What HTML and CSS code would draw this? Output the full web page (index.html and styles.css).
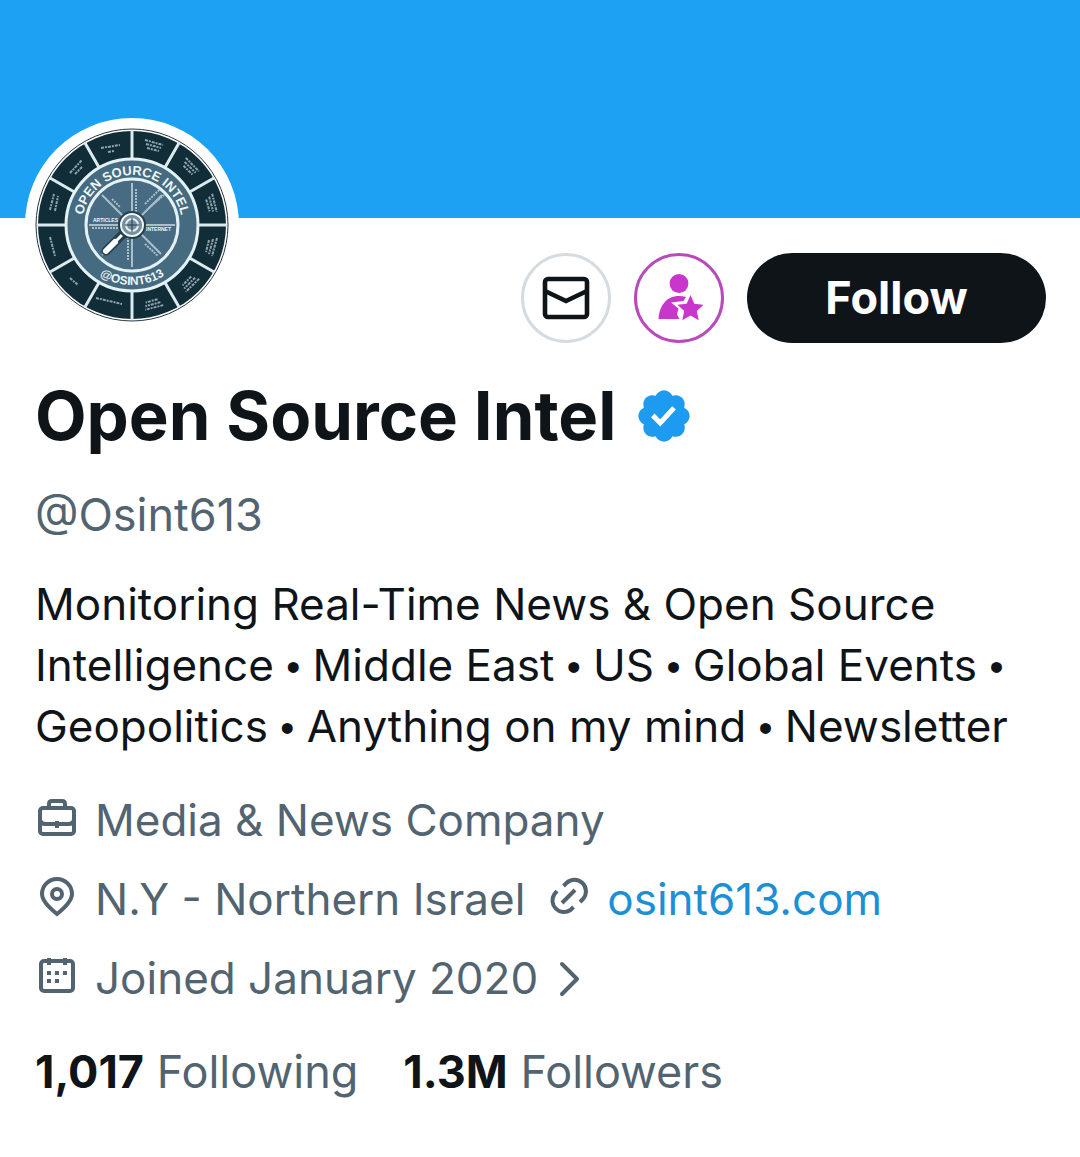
FILE: index.html
```html
<!DOCTYPE html>
<html lang="en">
<head>
<meta charset="utf-8">
<meta name="viewport" content="width=device-width, initial-scale=1">
<title>Open Source Intel (@Osint613)</title>
<link rel="stylesheet" href="styles.css">
</head>
<body>
<div class="banner"></div>
<main class="profile">
  <div class="top">
    <a class="avatar" href="#photo" aria-label="Profile photo">
      <svg viewBox="-97 -97 194 194" class="emblem">
        <defs>
          <path id="arc-top" d="M-50 0A50 50 0 0 1 50 0"/>
          <path id="arc-bottom" d="M-60 0A60 60 0 0 0 60 0"/>
        </defs>
        <circle r="96" fill="#fff" stroke="#26363f" stroke-width="1"/>
        <circle r="94" fill="#102d38"/>
        <g stroke="#dcebf0" stroke-width="3">
          <path d="M0-95V95M-95 0H95M-47-82L47 82M-82-47L82 47M47-82L-47 82M82-47L-82 47"/>
        </g>
        <g stroke="#8fa5ad" stroke-width="2" stroke-dasharray="3 1 2 1">
          <path id="labels" d="M13-85L31-80M14-81L29-77M15-77L27-74"/>
          <use href="#labels" transform="rotate(30)"/><use href="#labels" transform="rotate(60)"/>
          <use href="#labels" transform="rotate(90)"/><use href="#labels" transform="rotate(120)"/>
          <use href="#labels" transform="rotate(150)"/>
          <path d="M-31-77L-12-80M-24-73L-18-74M-62-52L-50-65M-57-51L-50-58M-82-15L-78-31M-77-14L-74-29M-82 12L-77 31M-62 53L-54 60M-36 73L-10 79"/>
        </g>
        <circle r="66" fill="#456b80" stroke="#e4f2f6" stroke-width="3"/>
        <circle r="46" fill="#466b82" stroke="#e4f2f6" stroke-width="3"/>
        <g class="emblem-text">
          <text font-size="13"><textPath href="#arc-top" startOffset="50%" text-anchor="middle">OPEN SOURCE INTEL</textPath></text>
          <text font-size="12"><textPath href="#arc-bottom" startOffset="50%" text-anchor="middle">@OSINT613</textPath></text>
          <text x="-39" y="-3" font-size="5">ARTICLES</text>
          <text x="14" y="6" font-size="5">INTERNET</text>
        </g>
        <g stroke="#a9c0ca" stroke-width="2" fill="none">
          <path d="M0-42V42M-43 0H43M-30-30L29 29M30-30L-30 30"/>
          <path stroke-dasharray="2 1" d="M4-36V-12M-4 12V36M13-21L28-36M17-17L32-30M13 19L26 31M-20-26L-12-18M-40 3H-14"/>
        </g>
        <path d="M-10 10L-26 26" stroke="#263f4b" stroke-width="9" stroke-linecap="round"/>
        <path d="M-10 10L-17 17" stroke="#fff" stroke-width="3"/>
        <path d="M-17 17L-26 26" stroke="#fff" stroke-width="6" stroke-linecap="round"/>
        <circle r="12" fill="#7891a0" stroke="#263f4b" stroke-width="4"/>
        <circle r="11" fill="none" stroke="#eef6f8" stroke-width="2"/>
        <circle r="6" fill="none" stroke="#e0edf1" stroke-width="2"/>
        <path d="M-7 0H7M0-7V7" stroke="#263f4b" stroke-width="1"/>
      </svg>
    </a>
    <div class="actions">
      <button class="round" type="button" aria-label="Message">
        <svg width="48" height="48" viewBox="0 0 48 48" fill="none" stroke="#0f1419" stroke-width="4.600"><rect x="3" y="5" width="42" height="38" rx="3"/><path d="M3 17L24 27L45 17"/></svg>
      </button>
      <button class="round super" type="button" aria-label="Subscribe">
        <svg width="48" height="48" viewBox="0 0 48 48" fill="#c936cc"><circle cx="24" cy="9.500" r="9.400"/><path d="M3.500 45C4.500 32 11 22 24 22Q28 22 31 23L28.500 27L16 28.500L23.500 34.500L22 40.500L24.500 45Z"/><path d="M35.500 21L39.300 29.700L48.500 30.700L41.800 37L43.700 46.200L35.500 41.500L27.300 46.200L29.200 37L22.500 30.700L31.700 29.700Z"/></svg>
      </button>
      <button class="follow" type="button">Follow</button>
    </div>
  </div>
  <h1 class="name">Open Source Intel
    <svg class="badge" viewBox="0 0 22 22" role="img" aria-label="Verified account"><path fill="#1d9bf0" d="M20.396 11c-.018-.646-.215-1.275-.57-1.816-.354-.54-.852-.972-1.438-1.246.223-.607.27-1.264.14-1.897-.131-.634-.437-1.218-.882-1.687-.47-.445-1.053-.75-1.687-.882-.633-.13-1.290-.083-1.897.14-.273-.587-.704-1.086-1.245-1.440S11.647 1.620 11 1.604c-.646.017-1.273.213-1.813.568s-.969.854-1.240 1.440c-.608-.223-1.267-.272-1.902-.14-.635.130-1.220.436-1.690.882-.445.470-.749 1.055-.878 1.688-.130.633-.080 1.290.144 1.896-.587.274-1.087.705-1.443 1.245-.356.540-.555 1.170-.574 1.817.020.647.218 1.276.574 1.817.356.540.856.972 1.443 1.245-.224.606-.274 1.263-.144 1.896.130.634.433 1.218.877 1.688.470.443 1.054.747 1.687.878.633.132 1.290.084 1.897-.136.274.586.705 1.084 1.246 1.439.540.354 1.170.551 1.816.569.647-.016 1.276-.213 1.817-.567s.972-.854 1.245-1.440c.604.239 1.266.296 1.903.164.636-.132 1.220-.447 1.680-.907.460-.460.776-1.044.908-1.681s.075-1.299-.165-1.903c.586-.274 1.084-.705 1.439-1.246.354-.540.551-1.170.569-1.816z"/><path fill="#fff" d="M9.662 14.850l-3.429-3.428 1.293-1.302 2.072 2.072 4.400-4.794 1.347 1.246z"/></svg>
  </h1>
  <p class="handle">@Osint613</p>
  <p class="bio">Monitoring Real-Time News &amp; Open Source Intelligence <span class="dot">•</span> Middle East <span class="dot">•</span> US <span class="dot">•</span> Global Events <span class="dot">•</span> Geopolitics <span class="dot">•</span> Anything on my mind <span class="dot">•</span> Newsletter</p>
  <ul class="meta">
    <li>
      <span class="item"><svg class="icon" viewBox="0 0 44 44"><rect x="5" y="12" width="34" height="26" rx="3"/><path d="M14 12V8Q14 5 17 5H27Q30 5 30 8V12M5 24Q6 28 10 28H34Q38 28 39 24M22 25V32"/></svg>Media &amp; News Company</span>
    </li>
    <li>
      <span class="item"><svg class="icon" viewBox="0 0 44 44"><path d="M22 39Q7 27 7 19A15 15 0 0 1 37 19Q37 27 22 39Z"/><circle cx="22" cy="19" r="5"/></svg>N.Y - Northern Israel</span>
      <span class="item"><svg class="icon" viewBox="0 0 44 44"><path d="M16.500 11L19.500 8A11.500 11.500 0 0 1 36 24L33 27M10 16L7.500 19A11.500 11.500 0 0 0 23.500 35L26.500 32M15 28L28 15"/></svg><a href="https://osint613.com">osint613.com</a></span>
    </li>
    <li>
      <a class="item joined" href="#about"><svg class="icon" viewBox="0 0 44 44"><rect x="6" y="7" width="32" height="30" rx="3"/><path d="M14 4V11M30 4V11"/><path d="M12 19H16M20 19H24M28 19H32M12 27H16M20 27H24"/></svg>Joined January 2020<svg class="chevron" viewBox="0 0 44 44"><path d="M16 7L31 22L16 37"/></svg></a>
    </li>
  </ul>
  <div class="stats">
    <a href="#following"><strong>1,017</strong> Following</a>
    <a href="#followers"><strong>1.3M</strong> Followers</a>
  </div>
</main>
</body>
</html>
```
FILE: styles.css
```css
* { box-sizing: border-box; }
body {
  margin: 0;
  background: #fff;
  color: #0f1419;
  font-family: Inter, "Liberation Sans", sans-serif;
  font-size: 45px;
  line-height: 61px;
}
h1, p, ul { margin: 0; padding: 0; }
a { text-decoration: none; color: inherit; }
.banner { height: 218px; background: #1da1f2; }
.profile { padding: 0 34px 53px 35px; }
.top { display: flex; justify-content: space-between; align-items: flex-start; }
.avatar {
  display: block;
  width: 214px;
  height: 214px;
  margin: -100px 0 0 -10px;
  padding: 10px;
  border-radius: 50%;
  background: #fff;
}
.emblem { display: block; width: 100%; height: 100%; }
.emblem-text { fill: #eef6f8; font-family: "Liberation Sans Narrow", "Liberation Sans", sans-serif; font-weight: 700; }
.actions { display: flex; gap: 23px; padding-top: 35px; }
.round {
  display: flex;
  align-items: center;
  justify-content: center;
  width: 90px;
  height: 90px;
  padding: 0;
  border: 3px solid #d5dbdf;
  border-radius: 50%;
  background: #fff;
}
.super { border-color: #b94abb; }
.follow {
  width: 299px;
  height: 90px;
  padding: 0 0 2px;
  border: 0;
  border-radius: 45px;
  background: #0f1419;
  color: #fff;
  font: 700 45px/61px Inter, "Liberation Sans", sans-serif;
}
.name {
  display: flex;
  align-items: center;
  gap: 18px;
  margin-top: 33px;
  font-size: 67px;
  line-height: 80px;
}
.badge { width: 60px; height: 60px; }
.handle { margin-top: 28px; color: #536471; }
.bio { margin-top: 29px; font-size: 44px; }
.dot { font-family: "Liberation Sans", sans-serif; font-size: 40px; line-height: 1; }
.meta {
  display: flex;
  flex-direction: column;
  gap: 18px;
  margin-top: 33px;
  list-style: none;
  color: #536471;
  font-size: 44px;
}
.meta li { display: flex; gap: 22px; }
.item { display: flex; align-items: center; gap: 16px; }
.item a { color: #1d8fd6; }
.icon, .chevron { width: 44px; height: 44px; fill: none; stroke: #536471; stroke-width: 4; }
.icon { margin-bottom: 6px; }
.chevron { margin-left: -8px; stroke-linecap: round; stroke-linejoin: round; }
.stats { display: flex; gap: 45px; margin-top: 32px; color: #536471; }
.stats strong { color: #0f1419; }
```
